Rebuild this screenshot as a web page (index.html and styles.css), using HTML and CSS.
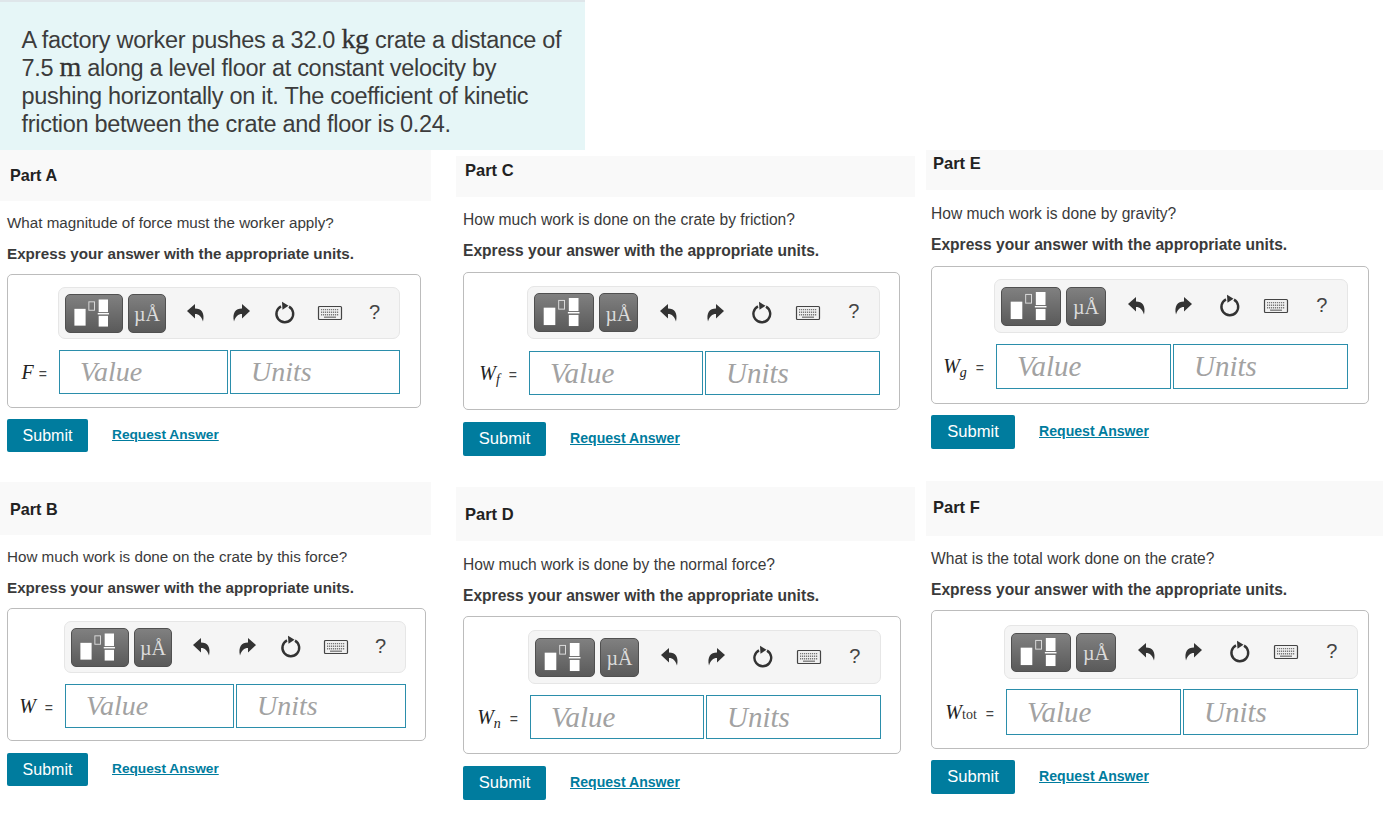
FILE: index.html
```html
<!DOCTYPE html>
<html lang="en">
<head>
<meta charset="utf-8">
<title>Work problem</title>
<link rel="stylesheet" href="styles.css">
</head>
<body>
<svg class="defs" width="0" height="0" aria-hidden="true">
  <symbol id="i-undo" viewBox="0 0 24 24"><path d="M3 10 L11 3 V7.500 C17.500 7.500 21 12 19 20.500 C17.500 15.500 15 13 11 13 V17.500 Z"/></symbol>
  <symbol id="i-redo" viewBox="0 0 24 24"><path d="M21 10 L13 3 V7.500 C6.500 7.500 3 12 5 20.500 C6.500 15.500 9 13 13 13 V17.500 Z"/></symbol>
  <symbol id="i-reset" viewBox="0 0 24 24"><path class="ring" d="M16 5.600 A8.400 8.400 0 1 1 8 5.400"/><path d="M9 0.800 L15.500 4.800 L9.500 8.800 Z"/></symbol>
  <symbol id="i-kbd" viewBox="0 0 26 16"><rect class="kb" x="1.500" y="1.500" width="23" height="13" rx="1"/><path class="kd" d="M4 4.600H22M4 7.200H22M4 9.800H22"/><path class="ks" d="M7 12.200H19"/></symbol>
  <symbol id="i-tpl" viewBox="0 0 60 38"><rect class="w" x="9" y="14" width="12" height="18"/><rect class="o" x="24.500" y="6.500" width="6" height="9"/><rect class="w" x="35" y="4" width="10" height="13.500"/><rect class="w" x="34" y="18.500" width="12" height="1.500"/><rect class="w" x="35" y="21.500" width="10" height="11.500"/></symbol>
</svg>

<section class="intro">
  <p class="intro-text">A factory worker pushes a 32.0 <span class="unit">kg</span> crate a distance of<br>7.5 <span class="unit">m</span> along a level floor at constant velocity by<br>pushing horizontally on it. The coefficient of kinetic<br>friction between the crate and floor is 0.24.</p>
</section>

<main class="columns">
  <div class="col col-1">
    <article class="part part-a">
      <h2 class="part-head">Part A</h2>
      <p class="q">What magnitude of force must the worker apply?</p>
      <p class="hint">Express your answer with the appropriate units.</p>
      <div class="box">
        <div class="toolbar">
          <span class="btn btn-tpl"><svg class="tpl"><use href="#i-tpl"/></svg></span><span class="btn btn-mu">µÅ</span>
          <span class="slot"><svg class="ic"><use href="#i-undo"/></svg></span><span class="slot"><svg class="ic"><use href="#i-redo"/></svg></span><span class="slot"><svg class="ic"><use href="#i-reset"/></svg></span><span class="slot"><svg class="kbd"><use href="#i-kbd"/></svg></span><span class="slot help">?</span>
        </div>
        <div class="row"><span class="lbl"><i>F</i><span class="eq">=</span></span><span class="field">Value</span><span class="field">Units</span></div>
      </div>
      <div class="actions"><span class="submit">Submit</span><a class="req" href="#">Request Answer</a></div>
    </article>
    <article class="part part-b">
      <h2 class="part-head">Part B</h2>
      <p class="q">How much work is done on the crate by this force?</p>
      <p class="hint">Express your answer with the appropriate units.</p>
      <div class="box">
        <div class="toolbar">
          <span class="btn btn-tpl"><svg class="tpl"><use href="#i-tpl"/></svg></span><span class="btn btn-mu">µÅ</span>
          <span class="slot"><svg class="ic"><use href="#i-undo"/></svg></span><span class="slot"><svg class="ic"><use href="#i-redo"/></svg></span><span class="slot"><svg class="ic"><use href="#i-reset"/></svg></span><span class="slot"><svg class="kbd"><use href="#i-kbd"/></svg></span><span class="slot help">?</span>
        </div>
        <div class="row"><span class="lbl"><i>W</i><span class="eq">=</span></span><span class="field">Value</span><span class="field">Units</span></div>
      </div>
      <div class="actions"><span class="submit">Submit</span><a class="req" href="#">Request Answer</a></div>
    </article>
  </div>

  <div class="col col-2">
    <article class="part part-c">
      <h2 class="part-head">Part C</h2>
      <p class="q">How much work is done on the crate by friction?</p>
      <p class="hint">Express your answer with the appropriate units.</p>
      <div class="box">
        <div class="toolbar">
          <span class="btn btn-tpl"><svg class="tpl"><use href="#i-tpl"/></svg></span><span class="btn btn-mu">µÅ</span>
          <span class="slot"><svg class="ic"><use href="#i-undo"/></svg></span><span class="slot"><svg class="ic"><use href="#i-redo"/></svg></span><span class="slot"><svg class="ic"><use href="#i-reset"/></svg></span><span class="slot"><svg class="kbd"><use href="#i-kbd"/></svg></span><span class="slot help">?</span>
        </div>
        <div class="row"><span class="lbl"><i>W<sub>f</sub></i><span class="eq">=</span></span><span class="field">Value</span><span class="field">Units</span></div>
      </div>
      <div class="actions"><span class="submit">Submit</span><a class="req" href="#">Request Answer</a></div>
    </article>
    <article class="part part-d">
      <h2 class="part-head">Part D</h2>
      <p class="q">How much work is done by the normal force?</p>
      <p class="hint">Express your answer with the appropriate units.</p>
      <div class="box">
        <div class="toolbar">
          <span class="btn btn-tpl"><svg class="tpl"><use href="#i-tpl"/></svg></span><span class="btn btn-mu">µÅ</span>
          <span class="slot"><svg class="ic"><use href="#i-undo"/></svg></span><span class="slot"><svg class="ic"><use href="#i-redo"/></svg></span><span class="slot"><svg class="ic"><use href="#i-reset"/></svg></span><span class="slot"><svg class="kbd"><use href="#i-kbd"/></svg></span><span class="slot help">?</span>
        </div>
        <div class="row"><span class="lbl"><i>W<sub>n</sub></i><span class="eq">=</span></span><span class="field">Value</span><span class="field">Units</span></div>
      </div>
      <div class="actions"><span class="submit">Submit</span><a class="req" href="#">Request Answer</a></div>
    </article>
  </div>

  <div class="col col-3">
    <article class="part part-e">
      <h2 class="part-head">Part E</h2>
      <p class="q">How much work is done by gravity?</p>
      <p class="hint">Express your answer with the appropriate units.</p>
      <div class="box">
        <div class="toolbar">
          <span class="btn btn-tpl"><svg class="tpl"><use href="#i-tpl"/></svg></span><span class="btn btn-mu">µÅ</span>
          <span class="slot"><svg class="ic"><use href="#i-undo"/></svg></span><span class="slot"><svg class="ic"><use href="#i-redo"/></svg></span><span class="slot"><svg class="ic"><use href="#i-reset"/></svg></span><span class="slot"><svg class="kbd"><use href="#i-kbd"/></svg></span><span class="slot help">?</span>
        </div>
        <div class="row"><span class="lbl"><i>W<sub>g</sub></i><span class="eq">=</span></span><span class="field">Value</span><span class="field">Units</span></div>
      </div>
      <div class="actions"><span class="submit">Submit</span><a class="req" href="#">Request Answer</a></div>
    </article>
    <article class="part part-f">
      <h2 class="part-head">Part F</h2>
      <p class="q">What is the total work done on the crate?</p>
      <p class="hint">Express your answer with the appropriate units.</p>
      <div class="box">
        <div class="toolbar">
          <span class="btn btn-tpl"><svg class="tpl"><use href="#i-tpl"/></svg></span><span class="btn btn-mu">µÅ</span>
          <span class="slot"><svg class="ic"><use href="#i-undo"/></svg></span><span class="slot"><svg class="ic"><use href="#i-redo"/></svg></span><span class="slot"><svg class="ic"><use href="#i-reset"/></svg></span><span class="slot"><svg class="kbd"><use href="#i-kbd"/></svg></span><span class="slot help">?</span>
        </div>
        <div class="row"><span class="lbl"><i>W</i><sub class="up">tot</sub><span class="eq">=</span></span><span class="field">Value</span><span class="field">Units</span></div>
      </div>
      <div class="actions"><span class="submit">Submit</span><a class="req" href="#">Request Answer</a></div>
    </article>
  </div>
</main>
</body>
</html>
```
FILE: styles.css
```css
* { box-sizing: border-box; }
html, body { margin: 0; padding: 0; background: #fff; }
body { width: 1383px; height: 825px; overflow: hidden; font-family: "Liberation Sans", Arial, sans-serif; color: #333; }
.defs { position: absolute; }

.intro { width: 585px; height: 150px; background: #e6f6f7; border-top: 2px solid #dfe6ea; padding: 24px 0 0 21.500px; }
.intro-text { margin: 0; font-size: 23.500px; line-height: 28px; letter-spacing: -0.3px; color: #3c3c3c; white-space: nowrap; }
.unit { font-family: "Liberation Serif", serif; font-size: 28px; line-height: 20px; color: #333; -webkit-text-stroke: 0.3px #333; }

.columns { display: flex; align-items: flex-start; }
.col-1 { width: 431px; margin-right: 25px; }
.col-2 { width: 459px; margin-right: 11px; padding-top: 6px; }
.col-3 { width: 457px; }

.part { --h: 51px; --tp: 16px; --qt: 13px; --bm: 12px; --eq: 9px; --box-w: 414px; --box-h: 134px; --tb-l: 50px; --tb-t: 12px; --tb-w: 342px; --tb-h: 52px; --btn1: 58px; --btn2: 38px; --bh: 39px; --fh: 44px; --f1: 169px; --f2: 170px; --row-t: 11px; --lbl: 51px; --sub-w: 81px; --sub-h: 33px; --act-t: 11px; --ff: 28px; --q: 15.200px; --pf: 16.200px; --rf: 13.700px; --sf: 16px; --mx: 7px; --hx: 10px; }
.part-head { margin: 0; height: var(--h); padding: var(--tp) 0 0 var(--hx); background: #f9f9f9; font-size: var(--pf); line-height: 18px; font-weight: bold; color: #222; }
.q { margin: var(--qt) 0 0 var(--mx); font-size: var(--q); line-height: 17px; color: #3a3a3a; white-space: nowrap; }
.hint { margin: 14px 0 0 var(--mx); font-size: var(--q); line-height: 17px; font-weight: bold; color: #3a3a3a; white-space: nowrap; }

.box { width: var(--box-w); height: var(--box-h); margin: var(--bm) 0 0 var(--mx); border: 1px solid #bcbcbc; border-radius: 5px; padding-left: var(--tb-l); padding-top: var(--tb-t); }
.toolbar { display: flex; align-items: center; width: var(--tb-w); height: var(--tb-h); padding: 0 2px 0 6px; background: #f5f5f5; border: 1px solid #e6e6e6; border-radius: 7px; }
.btn { display: flex; align-items: center; justify-content: center; height: var(--bh); background: linear-gradient(#808080, #5a5a5a); border: 1px solid #505050; border-radius: 5px; }
.btn-tpl { width: var(--btn1); }
.btn-mu { width: var(--btn2); margin-left: 5px; margin-right: 8px; font-family: "Liberation Serif", serif; font-size: 20px; color: #dcdcdc; padding-top: 3px; }
.tpl { width: 100%; height: 100%; }
#i-tpl .w { fill: #fff; }
#i-tpl .o { fill: none; stroke: #ddd; stroke-width: 1; }
.slot { flex: 1; display: flex; align-items: center; justify-content: center; color: #333; }
.ic { width: 24px; height: 24px; fill: #333; }
#i-reset .ring { fill: none; stroke: #333; stroke-width: 2.400; }
.kbd { width: 26px; height: 16px; }
#i-kbd .kb { fill: #f0f0f0; stroke: #444; stroke-width: 1.200; }
#i-kbd .kd { fill: none; stroke: #777; stroke-width: 1.400; stroke-dasharray: 1.200 .8; }
#i-kbd .ks { fill: none; stroke: #777; stroke-width: 1.300; }
.help { font-size: 20px; color: #444; padding-bottom: 2px; }

.row { display: flex; align-items: stretch; margin-top: var(--row-t); margin-left: calc(0px - var(--tb-l)); }
.lbl { width: var(--lbl); flex: none; display: flex; align-items: baseline; justify-content: flex-end; align-self: center; padding-right: 12px; color: #444; white-space: nowrap; }
.lbl i { font-family: "Liberation Serif", serif; font-size: 20px; color: #222; }
.eq { font-size: 14px; margin-left: var(--eq); }
.lbl sub { font-size: 14px; line-height: 0; vertical-align: -4px; }
.lbl .up { font-family: "Liberation Serif", serif; font-size: 14px; color: #333; vertical-align: -4px; }
.field { display: block; height: var(--fh); padding-left: 20px; border: 1px solid #2b8eab; font-family: "Liberation Serif", serif; font-style: italic; font-size: var(--ff); line-height: calc(var(--fh) - 2px); color: #a2a2a2; }
.field:nth-of-type(2) { width: var(--f1); }
.field:nth-of-type(3) { width: var(--f2); margin-left: 2px; }

.actions { display: flex; align-items: center; margin: var(--act-t) 0 0 var(--mx); }
.submit { display: block; width: var(--sub-w); height: var(--sub-h); background: #007c9e; color: #fff; font-size: var(--sf); line-height: var(--sub-h); text-align: center; border-radius: 2px; }
.req { margin-left: 24px; margin-bottom: 2px; font-size: var(--rf); font-weight: bold; color: #007c9e; text-decoration: underline; }

.part-a { --eq: 5px; }
.part-b { margin-top: 30px; --h: 53px; --tp: 18px; --qt: 13px; --box-w: 419px; --box-h: 133px; --tb-l: 56px; --lbl: 57px; --act-t: 12px; }
.part-c, .part-d, .part-e, .part-f { --box-w: 438px; --box-h: 138px; --tb-w: 353px; --tb-h: 54px; --btn1: 60px; --btn2: 39px; --f1: 174px; --f2: 175px; --row-t: 11px; --sub-w: 83px; --sub-h: 34px; --act-t: 12px; --ff: 29px; --q: 15.600px; --pf: 16.500px; --rf: 14.100px; --sf: 16.600px; --hx: 9px; }
.part-c { --h: 41px; --tp: 5px; --qt: 14px; --bm: 13px; --box-w: 437px; --tb-l: 63px; --tb-t: 13px; --tb-h: 53px; --lbl: 65px; --row-t: 12px; }
.part-d { margin-top: 31px; --h: 54px; --tp: 18px; --qt: 15px; --tb-l: 64px; --tb-t: 13px; --lbl: 66px; }
.part-e, .part-f { --mx: 5px; --hx: 7px; --tb-w: 354px; --btn2: 40px; --f1: 175px; --sub-w: 84px; --act-t: 11px; }
.part-e { --h: 40px; --tp: 4px; --qt: 15px; --bm: 13px; --tb-l: 62px; --tb-t: 12px; --lbl: 64px; --fh: 45px; }
.part-f { margin-top: 32px; --h: 55px; --tp: 17px; --qt: 14px; --box-h: 139px; --tb-l: 72px; --tb-t: 14px; --lbl: 74px; --fh: 46px; --row-t: 10px; }
```
